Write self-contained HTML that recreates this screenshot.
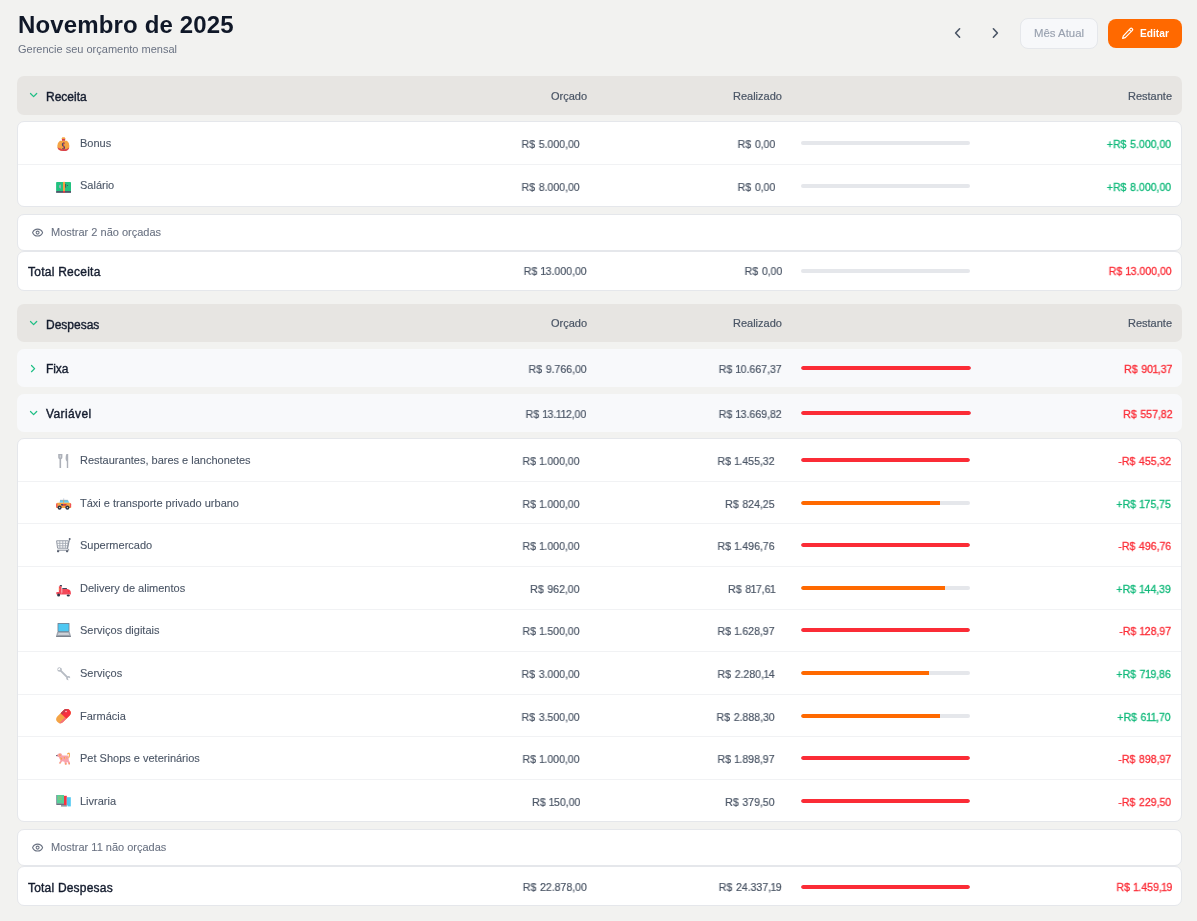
<!DOCTYPE html>
<html><head><meta charset="utf-8"><style>
html,body{margin:0;padding:0;width:1197px;height:921px;overflow:hidden;background:#f2f2f0;font-family:"Liberation Sans", sans-serif;}
.t{position:absolute;white-space:nowrap;will-change:transform;}
.b{position:absolute;}
.one{margin:0 -0.6px;}
svg{display:block}
</style></head><body>
<div class="t" style="left:18px;top:12.68px;font-size:24px;line-height:24px;font-weight:700;color:#101828;letter-spacing:0.15px;">Novembro de 2025</div><div class="t" style="left:18px;top:43.69px;font-size:11px;line-height:11px;color:#6a7282;">Gerencie seu orçamento mensal</div><svg class="b" style="left:950px;top:26px" width="14" height="14" viewBox="0 0 14 14"><path d="M9.6 2.8 L5.6 7 L9.6 11.2" fill="none" stroke="#4a5565" stroke-width="1.6" stroke-linecap="round" stroke-linejoin="round"/></svg><svg class="b" style="left:989px;top:26px" width="14" height="14" viewBox="0 0 14 14"><path d="M4.4 2.8 L8.4 7 L4.4 11.2" fill="none" stroke="#4a5565" stroke-width="1.6" stroke-linecap="round" stroke-linejoin="round"/></svg><div class="b" style="left:1020px;top:18px;width:77.5px;height:31px;background:#f7f8fa;border-radius:8px;border:1px solid #e5e7eb;box-sizing:border-box;"></div><div class="t" style="left:1034px;top:27.65px;font-size:11.4px;line-height:11.4px;color:#99a1af;-webkit-text-stroke:0.15px #99a1af;">Mês Atual</div><div class="b" style="left:1108px;top:19px;width:74px;height:29px;background:#ff6900;border-radius:8px;"></div><svg class="b" style="left:1120.6px;top:27.2px" width="14" height="13" viewBox="0 0 14 13"><path d="M9.2 1.6 a1.4 1.4 0 0 1 2 2 L4.2 10.6 L1.6 11.4 L2.4 8.8 Z M8.2 2.6 L10.2 4.6" fill="none" stroke="#fff" stroke-width="1.2" stroke-linejoin="round"/></svg><div class="t" style="left:1140.3px;top:28.57px;font-size:10.2px;line-height:10.2px;font-weight:700;color:#fff;">Editar</div><div class="b" style="left:17px;top:76px;width:1165px;height:39px;background:#e7e5e2;border-radius:7px;"></div><svg class="b" style="left:28.5px;top:92px" width="10" height="8" viewBox="0 0 10 8"><path d="M1.5 1.5 L4.6 4.6 L7.7 1.5" fill="none" stroke="#1fbf85" stroke-width="1.25" stroke-linecap="round" stroke-linejoin="round"/></svg><div class="t" style="left:46.4px;top:90.84px;font-size:12px;line-height:12px;color:#141c2e;-webkit-text-stroke:0.38px #141c2e;">Receita</div><div class="t" style="right:610.3px;top:90.69px;font-size:11px;line-height:11px;color:#4a5565;-webkit-text-stroke:0.2px #4a5565;">Orçado</div><div class="t" style="right:415px;top:90.69px;font-size:11px;line-height:11px;color:#4a5565;-webkit-text-stroke:0.2px #4a5565;">Realizado</div><div class="t" style="right:24.700000000000045px;top:90.69px;font-size:11px;line-height:11px;color:#4a5565;-webkit-text-stroke:0.2px #4a5565;">Restante</div><div class="b" style="left:17px;top:121px;width:1165px;height:86px;background:#fff;border-radius:7px;border:1px solid #e5e7eb;box-sizing:border-box;"></div><div class="b" style="left:18px;top:164px;width:1163px;height:1px;background:#f1f2f4;border-radius:0px;"></div><div class="b" style="left:56px;top:136px;width:16px;height:16px"><svg width="16" height="16" viewBox="0 0 16 16" shape-rendering="geometricPrecision"><path d="M5.2 3.2 L6.4 1.2 L8.6 1.2 L9.8 3.2Z" fill="#f4a445"/><rect x="6" y="3" width="3.1" height="1.9" fill="#d9424f"/><path d="M4 4.7 L11 4.7 Q13.4 6.5 13.4 10 Q13.4 15 7.5 15 Q1.3 15 1.3 10 Q1.3 6.5 4 4.7Z" fill="#f4a445"/><path d="M1.5 11.2 Q3 12.6 4.6 12.4 Q6 13.6 7.5 13.2 Q10 13.8 13.2 11.4 Q12.8 15 7.5 15 Q2 15 1.5 11.2Z" fill="#d9424f"/><path d="M8.6 7.2 Q6.2 6.8 6.4 8.8 Q6.6 10 8 10.4 Q9 11 8.2 12.6 Q7 13 6.4 12.4" fill="none" stroke="#3b4a6b" stroke-width="1.1"/><path d="M7.6 6.2 L7.6 13.8" stroke="#c8404e" stroke-width="0.8"/></svg></div><div class="t" style="left:80px;top:137.69px;font-size:11px;line-height:11px;color:#4a5565;-webkit-text-stroke:0.1px #4a5565;">Bonus</div><div class="t" style="right:617px;top:138.69px;font-size:11px;line-height:11px;color:#4a5565;-webkit-text-stroke:0.2px #4a5565;transform:scaleX(0.958);transform-origin:100% 50%;word-spacing:0.8px;">R$ 5.000,00</div><div class="t" style="right:422px;top:138.69px;font-size:11px;line-height:11px;color:#4a5565;-webkit-text-stroke:0.2px #4a5565;transform:scaleX(0.958);transform-origin:100% 50%;word-spacing:0.8px;">R$ 0,00</div><div class="b" style="left:801px;top:141px;width:169px;height:4px;background:#e5e7eb;border-radius:2px;overflow:hidden"><div style="width:0.00%;height:100%;background:#fb2c36;border-radius:2px 0 0 2px"></div></div><div class="t" style="right:26px;top:138.69px;font-size:11px;line-height:11px;color:#10b97a;-webkit-text-stroke:0.3px #10b97a;transform:scaleX(0.958);transform-origin:100% 50%;word-spacing:0.8px;">+R$ 5.000,00</div><div class="b" style="left:56px;top:179px;width:16px;height:16px"><svg width="16" height="16" viewBox="0 0 16 16" shape-rendering="geometricPrecision"><rect x="0.1" y="2.9" width="14.9" height="9.4" rx="0.8" fill="#22c27f"/><rect x="0.1" y="12.1" width="14.9" height="1.7" fill="#3f4a5e"/><rect x="7" y="2.9" width="2" height="9.3" fill="#f59f42"/><rect x="7" y="12.1" width="2" height="1.7" fill="#e0404c"/><path d="M3.2 6.6 L4.7 5.3 L4.7 9.8 L3.2 8.6Z" fill="#b9a7c8"/><rect x="9.2" y="5" width="0.9" height="3.6" fill="#3f4a5e"/><circle cx="11.5" cy="6.5" r="0.6" fill="#3f4a5e"/></svg></div><div class="t" style="left:80px;top:179.69px;font-size:11px;line-height:11px;color:#4a5565;-webkit-text-stroke:0.1px #4a5565;">Salário</div><div class="t" style="right:617px;top:182.09px;font-size:11px;line-height:11px;color:#4a5565;-webkit-text-stroke:0.2px #4a5565;transform:scaleX(0.958);transform-origin:100% 50%;word-spacing:0.8px;">R$ 8.000,00</div><div class="t" style="right:422px;top:182.09px;font-size:11px;line-height:11px;color:#4a5565;-webkit-text-stroke:0.2px #4a5565;transform:scaleX(0.958);transform-origin:100% 50%;word-spacing:0.8px;">R$ 0,00</div><div class="b" style="left:801px;top:184px;width:169px;height:4px;background:#e5e7eb;border-radius:2px;overflow:hidden"><div style="width:0.00%;height:100%;background:#fb2c36;border-radius:2px 0 0 2px"></div></div><div class="t" style="right:26px;top:182.09px;font-size:11px;line-height:11px;color:#10b97a;-webkit-text-stroke:0.3px #10b97a;transform:scaleX(0.958);transform-origin:100% 50%;word-spacing:0.8px;">+R$ 8.000,00</div><div class="b" style="left:17px;top:214px;width:1165px;height:37px;background:#fff;border-radius:7px;border:1px solid #e5e7eb;box-sizing:border-box;"></div><svg class="b" style="left:30.8px;top:224px" width="13" height="18" viewBox="0 0 13 18"><g transform="translate(0.6 2.6) scale(0.5)"><path d="M2.062 12.348a1 1 0 0 1 0-.696 10.75 10.75 0 0 1 19.876 0 1 1 0 0 1 0 .696 10.75 10.75 0 0 1-19.876 0" fill="none" stroke="#6a7282" stroke-width="2.1"/><circle cx="12" cy="12" r="3" fill="none" stroke="#6a7282" stroke-width="2.1"/></g></svg><div class="t" style="left:50.7px;top:226.69px;font-size:11px;line-height:11px;color:#6a7282;-webkit-text-stroke:0.1px #6a7282;">Mostrar 2 não orçadas</div><div class="b" style="left:17px;top:251px;width:1165px;height:40px;background:#fff;border-radius:7px;border:1px solid #e5e7eb;box-sizing:border-box;"></div><div class="t" style="left:27.6px;top:265.64px;font-size:12px;line-height:12px;color:#141c2e;letter-spacing:0.25px;-webkit-text-stroke:0.38px #141c2e;">Total Receita</div><div class="t" style="right:610.5px;top:266.49px;font-size:11px;line-height:11px;color:#4a5565;-webkit-text-stroke:0.2px #4a5565;transform:scaleX(0.958);transform-origin:100% 50%;word-spacing:0.8px;">R$ <span class="one">1</span>3.000,00</div><div class="t" style="right:415px;top:266.49px;font-size:11px;line-height:11px;color:#4a5565;-webkit-text-stroke:0.2px #4a5565;transform:scaleX(0.958);transform-origin:100% 50%;word-spacing:0.8px;">R$ 0,00</div><div class="b" style="left:801px;top:269px;width:169px;height:4px;background:#e5e7eb;border-radius:2px;overflow:hidden"><div style="width:0.00%;height:100%;background:#fb2c36;border-radius:2px 0 0 2px"></div></div><div class="t" style="right:25px;top:266.49px;font-size:11px;line-height:11px;color:#fb2c36;-webkit-text-stroke:0.3px #fb2c36;transform:scaleX(0.958);transform-origin:100% 50%;word-spacing:0.8px;">R$ <span class="one">1</span>3.000,00</div><div class="b" style="left:17px;top:304px;width:1165px;height:38px;background:#e7e5e2;border-radius:7px;"></div><svg class="b" style="left:28.5px;top:320px" width="10" height="8" viewBox="0 0 10 8"><path d="M1.5 1.5 L4.6 4.6 L7.7 1.5" fill="none" stroke="#1fbf85" stroke-width="1.25" stroke-linecap="round" stroke-linejoin="round"/></svg><div class="t" style="left:46.4px;top:318.64px;font-size:12px;line-height:12px;color:#141c2e;-webkit-text-stroke:0.38px #141c2e;">Despesas</div><div class="t" style="right:610.3px;top:318.19px;font-size:11px;line-height:11px;color:#4a5565;-webkit-text-stroke:0.2px #4a5565;">Orçado</div><div class="t" style="right:415px;top:318.19px;font-size:11px;line-height:11px;color:#4a5565;-webkit-text-stroke:0.2px #4a5565;">Realizado</div><div class="t" style="right:24.700000000000045px;top:318.19px;font-size:11px;line-height:11px;color:#4a5565;-webkit-text-stroke:0.2px #4a5565;">Restante</div><div class="b" style="left:17px;top:349px;width:1165px;height:38px;background:#f8f9fb;border-radius:7px;"></div><svg class="b" style="left:30px;top:363.5px" width="8" height="10" viewBox="0 0 8 10"><path d="M1.5 1.5 L4.6 4.6 L1.5 7.7" fill="none" stroke="#1fbf85" stroke-width="1.25" stroke-linecap="round" stroke-linejoin="round"/></svg><div class="t" style="left:46.4px;top:362.64px;font-size:12px;line-height:12px;color:#141c2e;letter-spacing:-0.1px;-webkit-text-stroke:0.38px #141c2e;">Fixa</div><div class="t" style="right:610.5px;top:363.89px;font-size:11px;line-height:11px;color:#4a5565;-webkit-text-stroke:0.2px #4a5565;transform:scaleX(0.958);transform-origin:100% 50%;word-spacing:0.8px;">R$ 9.766,00</div><div class="t" style="right:415px;top:363.89px;font-size:11px;line-height:11px;color:#4a5565;-webkit-text-stroke:0.2px #4a5565;transform:scaleX(0.958);transform-origin:100% 50%;word-spacing:0.8px;">R$ <span class="one">1</span>0.667,37</div><div class="b" style="left:801px;top:366px;width:170px;height:4px;background:#e5e7eb;border-radius:2px;overflow:hidden"><div style="width:100.00%;height:100%;background:#fb2c36;border-radius:2px"></div></div><div class="t" style="right:24.40000000000009px;top:363.89px;font-size:11px;line-height:11px;color:#fb2c36;-webkit-text-stroke:0.3px #fb2c36;transform:scaleX(0.958);transform-origin:100% 50%;word-spacing:0.8px;">R$ 90<span class="one">1</span>,37</div><div class="b" style="left:17px;top:394px;width:1165px;height:38px;background:#f8f9fb;border-radius:7px;"></div><svg class="b" style="left:28.5px;top:410px" width="10" height="8" viewBox="0 0 10 8"><path d="M1.5 1.5 L4.6 4.6 L7.7 1.5" fill="none" stroke="#1fbf85" stroke-width="1.25" stroke-linecap="round" stroke-linejoin="round"/></svg><div class="t" style="left:46.4px;top:408.24px;font-size:12px;line-height:12px;color:#141c2e;letter-spacing:0.4px;-webkit-text-stroke:0.38px #141c2e;">Variável</div><div class="t" style="right:610.5px;top:409.49px;font-size:11px;line-height:11px;color:#4a5565;-webkit-text-stroke:0.2px #4a5565;transform:scaleX(0.958);transform-origin:100% 50%;word-spacing:0.8px;">R$ <span class="one">1</span>3.<span class="one">1</span><span class="one">1</span>2,00</div><div class="t" style="right:415px;top:409.49px;font-size:11px;line-height:11px;color:#4a5565;-webkit-text-stroke:0.2px #4a5565;transform:scaleX(0.958);transform-origin:100% 50%;word-spacing:0.8px;">R$ <span class="one">1</span>3.669,82</div><div class="b" style="left:801px;top:411px;width:170px;height:4px;background:#e5e7eb;border-radius:2px;overflow:hidden"><div style="width:100.00%;height:100%;background:#fb2c36;border-radius:2px"></div></div><div class="t" style="right:24.40000000000009px;top:409.49px;font-size:11px;line-height:11px;color:#fb2c36;-webkit-text-stroke:0.3px #fb2c36;transform:scaleX(0.958);transform-origin:100% 50%;word-spacing:0.8px;">R$ 557,82</div><div class="b" style="left:17px;top:438px;width:1165px;height:384px;background:#fff;border-radius:7px;border:1px solid #e5e7eb;box-sizing:border-box;"></div><div class="b" style="left:18px;top:481px;width:1163px;height:1px;background:#f1f2f4;border-radius:0px;"></div><div class="b" style="left:56px;top:453px;width:16px;height:16px"><svg width="16" height="16" viewBox="0 0 16 16" shape-rendering="geometricPrecision"><path d="M2.2 1 L6.4 1 L6.4 4.6 Q6.4 5.8 5.1 6.2 L5.1 15 L3.5 15 L3.5 6.2 Q2.2 5.8 2.2 4.6Z" fill="#adb1b9"/><rect x="3.8" y="2.2" width="0.9" height="2.4" fill="#dfe1e5"/><path d="M10.4 1 L12.2 1 L12.2 15 L10.8 15 L10.8 8.6 Q9.6 7.6 9.6 5.6 Q9.6 2.4 10.4 1Z" fill="#adb1b9"/></svg></div><div class="t" style="left:80px;top:454.69px;font-size:11px;line-height:11px;color:#4a5565;-webkit-text-stroke:0.1px #4a5565;">Restaurantes, bares e lanchonetes</div><div class="t" style="right:617px;top:455.69px;font-size:11px;line-height:11px;color:#4a5565;-webkit-text-stroke:0.2px #4a5565;transform:scaleX(0.958);transform-origin:100% 50%;word-spacing:0.8px;">R$ <span class="one">1</span>.000,00</div><div class="t" style="right:422px;top:455.69px;font-size:11px;line-height:11px;color:#4a5565;-webkit-text-stroke:0.2px #4a5565;transform:scaleX(0.958);transform-origin:100% 50%;word-spacing:0.8px;">R$ <span class="one">1</span>.455,32</div><div class="b" style="left:801px;top:458px;width:169px;height:4px;background:#e5e7eb;border-radius:2px;overflow:hidden"><div style="width:100.00%;height:100%;background:#fb2c36;border-radius:2px"></div></div><div class="t" style="right:26px;top:455.69px;font-size:11px;line-height:11px;color:#fb2c36;-webkit-text-stroke:0.3px #fb2c36;transform:scaleX(0.958);transform-origin:100% 50%;word-spacing:0.8px;">-R$ 455,32</div><div class="b" style="left:18px;top:523px;width:1163px;height:1px;background:#f1f2f4;border-radius:0px;"></div><div class="b" style="left:56px;top:496px;width:16px;height:16px"><svg width="16" height="16" viewBox="0 0 16 16" shape-rendering="geometricPrecision"><rect x="7.3" y="2.3" width="0.9" height="1.8" fill="#c9d3df"/><rect x="4" y="3.9" width="7.9" height="0.8" fill="#7b8090"/><path d="M3.4 6.8 L4.2 4.6 L12.2 4.6 L13.2 6.8Z" fill="#5fcdf0"/><rect x="7.3" y="4.4" width="0.8" height="2.4" fill="#f59f42"/><path d="M0.3 8 Q0.3 6.7 2 6.7 L13.6 6.7 Q15.1 6.7 15.1 8.2 L15.1 11.9 L0.3 11.9Z" fill="#f5a443"/><rect x="0.1" y="7.6" width="1.3" height="3.8" fill="#f0505c"/><rect x="14" y="7.6" width="1.1" height="3.6" fill="#f0505c"/><path d="M5.2 8 L10.8 8 L10 9.8 L6.2 9.8Z" fill="#c9404e"/><rect x="5" y="8" width="2" height="1.4" fill="#3f4a6e"/><circle cx="3.6" cy="11.6" r="2.1" fill="#2c3648"/><circle cx="3.6" cy="11.6" r="0.7" fill="#d5d9e0"/><circle cx="11.4" cy="11.6" r="2.1" fill="#2c3648"/><circle cx="11.4" cy="11.6" r="0.7" fill="#d5d9e0"/></svg></div><div class="t" style="left:80px;top:497.69px;font-size:11px;line-height:11px;color:#4a5565;-webkit-text-stroke:0.1px #4a5565;">Táxi e transporte privado urbano</div><div class="t" style="right:617px;top:498.69px;font-size:11px;line-height:11px;color:#4a5565;-webkit-text-stroke:0.2px #4a5565;transform:scaleX(0.958);transform-origin:100% 50%;word-spacing:0.8px;">R$ <span class="one">1</span>.000,00</div><div class="t" style="right:422px;top:498.69px;font-size:11px;line-height:11px;color:#4a5565;-webkit-text-stroke:0.2px #4a5565;transform:scaleX(0.958);transform-origin:100% 50%;word-spacing:0.8px;">R$ 824,25</div><div class="b" style="left:801px;top:501px;width:169px;height:4px;background:#e5e7eb;border-radius:2px;overflow:hidden"><div style="width:82.40%;height:100%;background:#ff6900;border-radius:2px 0 0 2px"></div></div><div class="t" style="right:26px;top:498.69px;font-size:11px;line-height:11px;color:#10b97a;-webkit-text-stroke:0.3px #10b97a;transform:scaleX(0.958);transform-origin:100% 50%;word-spacing:0.8px;">+R$ <span class="one">1</span>75,75</div><div class="b" style="left:18px;top:566px;width:1163px;height:1px;background:#f1f2f4;border-radius:0px;"></div><div class="b" style="left:56px;top:538px;width:16px;height:16px"><svg width="16" height="16" viewBox="0 0 16 16" shape-rendering="geometricPrecision"><path d="M0.6 2.8 L12.4 2.8 L11.6 10.2 L1.6 10.2Z" fill="none" stroke="#9097a3" stroke-width="1"/><path d="M0.9 5.3 L12.1 5.3 M1.2 7.8 L11.9 7.8 M3.8 2.8 L3.9 10.2 M6.8 2.8 L6.8 10.2 M9.6 2.8 L9.4 10.2" stroke="#a3a9b3" stroke-width="0.9"/><path d="M13.6 1.2 L11.4 10.6 Q13 11 12.8 12.2 L1.2 12.2" fill="none" stroke="#8a919d" stroke-width="1"/><circle cx="13.7" cy="1.1" r="1" fill="#5b6272"/><rect x="1" y="12.2" width="2.2" height="2" rx="0.6" fill="#5b6272"/><rect x="10" y="12.2" width="2.2" height="2" rx="0.6" fill="#5b6272"/></svg></div><div class="t" style="left:80px;top:539.69px;font-size:11px;line-height:11px;color:#4a5565;-webkit-text-stroke:0.1px #4a5565;">Supermercado</div><div class="t" style="right:617px;top:540.69px;font-size:11px;line-height:11px;color:#4a5565;-webkit-text-stroke:0.2px #4a5565;transform:scaleX(0.958);transform-origin:100% 50%;word-spacing:0.8px;">R$ <span class="one">1</span>.000,00</div><div class="t" style="right:422px;top:540.69px;font-size:11px;line-height:11px;color:#4a5565;-webkit-text-stroke:0.2px #4a5565;transform:scaleX(0.958);transform-origin:100% 50%;word-spacing:0.8px;">R$ <span class="one">1</span>.496,76</div><div class="b" style="left:801px;top:543px;width:169px;height:4px;background:#e5e7eb;border-radius:2px;overflow:hidden"><div style="width:100.00%;height:100%;background:#fb2c36;border-radius:2px"></div></div><div class="t" style="right:26px;top:540.69px;font-size:11px;line-height:11px;color:#fb2c36;-webkit-text-stroke:0.3px #fb2c36;transform:scaleX(0.958);transform-origin:100% 50%;word-spacing:0.8px;">-R$ 496,76</div><div class="b" style="left:18px;top:609px;width:1163px;height:1px;background:#f1f2f4;border-radius:0px;"></div><div class="b" style="left:56px;top:581px;width:16px;height:16px"><svg width="16" height="16" viewBox="0 0 16 16" shape-rendering="geometricPrecision"><rect x="3.8" y="4" width="2.1" height="1.6" fill="#3f4a5e"/><path d="M2.9 5.2 L5.5 5.2 L5.6 11 L2.9 11Z" fill="#f24a5a"/><rect x="2.9" y="7.4" width="0.7" height="1.4" fill="#f5b041"/><rect x="6.2" y="7" width="4.8" height="1.1" rx="0.5" fill="#3f4a5e"/><path d="M6.2 8.1 L11.5 8.1 Q14.9 8.6 14.9 12 L14.9 13.6 L5.5 13.6 L5.5 11.8 L6.2 11.8Z" fill="#f24a5a"/><path d="M0.1 11.8 Q0.3 11 1.6 11 L5.6 11 L5.6 13.6 L0.6 13.6Z" fill="#f24a5a"/><path d="M11.8 9 Q13.4 9.8 13.6 11.2 L12 10.6Z" fill="#ff1e2e"/><circle cx="2.6" cy="14" r="1.5" fill="#2c3648"/><ellipse cx="12.3" cy="14.4" rx="1.6" ry="1" fill="#2c3648"/></svg></div><div class="t" style="left:80px;top:582.69px;font-size:11px;line-height:11px;color:#4a5565;-webkit-text-stroke:0.1px #4a5565;">Delivery de alimentos</div><div class="t" style="right:617px;top:583.69px;font-size:11px;line-height:11px;color:#4a5565;-webkit-text-stroke:0.2px #4a5565;transform:scaleX(0.958);transform-origin:100% 50%;word-spacing:0.8px;">R$ 962,00</div><div class="t" style="right:422px;top:583.69px;font-size:11px;line-height:11px;color:#4a5565;-webkit-text-stroke:0.2px #4a5565;transform:scaleX(0.958);transform-origin:100% 50%;word-spacing:0.8px;">R$ 8<span class="one">1</span>7,6<span class="one">1</span></div><div class="b" style="left:801px;top:586px;width:169px;height:4px;background:#e5e7eb;border-radius:2px;overflow:hidden"><div style="width:85.00%;height:100%;background:#ff6900;border-radius:2px 0 0 2px"></div></div><div class="t" style="right:26px;top:583.69px;font-size:11px;line-height:11px;color:#10b97a;-webkit-text-stroke:0.3px #10b97a;transform:scaleX(0.958);transform-origin:100% 50%;word-spacing:0.8px;">+R$ <span class="one">1</span>44,39</div><div class="b" style="left:18px;top:651px;width:1163px;height:1px;background:#f1f2f4;border-radius:0px;"></div><div class="b" style="left:56px;top:623px;width:16px;height:16px"><svg width="16" height="16" viewBox="0 0 16 16" shape-rendering="geometricPrecision"><rect x="1.6" y="0.1" width="11.8" height="8.8" fill="#6b7280"/><rect x="2.3" y="0.8" width="10.4" height="7.5" fill="#4fc8f2"/><path d="M1.2 9 L13.8 9 L14.9 13 L0.1 13Z" fill="#a3a9b3"/><rect x="2.4" y="10" width="10.2" height="0.7" fill="#e3e6ea"/><rect x="2" y="11.4" width="11" height="0.6" fill="#e3e6ea"/><rect x="0.1" y="12.8" width="14.8" height="1.2" fill="#7b818c"/></svg></div><div class="t" style="left:80px;top:624.69px;font-size:11px;line-height:11px;color:#4a5565;-webkit-text-stroke:0.1px #4a5565;">Serviços digitais</div><div class="t" style="right:617px;top:625.69px;font-size:11px;line-height:11px;color:#4a5565;-webkit-text-stroke:0.2px #4a5565;transform:scaleX(0.958);transform-origin:100% 50%;word-spacing:0.8px;">R$ <span class="one">1</span>.500,00</div><div class="t" style="right:422px;top:625.69px;font-size:11px;line-height:11px;color:#4a5565;-webkit-text-stroke:0.2px #4a5565;transform:scaleX(0.958);transform-origin:100% 50%;word-spacing:0.8px;">R$ <span class="one">1</span>.628,97</div><div class="b" style="left:801px;top:628px;width:169px;height:4px;background:#e5e7eb;border-radius:2px;overflow:hidden"><div style="width:100.00%;height:100%;background:#fb2c36;border-radius:2px"></div></div><div class="t" style="right:26px;top:625.69px;font-size:11px;line-height:11px;color:#fb2c36;-webkit-text-stroke:0.3px #fb2c36;transform:scaleX(0.958);transform-origin:100% 50%;word-spacing:0.8px;">-R$ <span class="one">1</span>28,97</div><div class="b" style="left:18px;top:694px;width:1163px;height:1px;background:#f1f2f4;border-radius:0px;"></div><div class="b" style="left:56px;top:666px;width:16px;height:16px"><svg width="16" height="16" viewBox="0 0 16 16" shape-rendering="geometricPrecision"><path d="M4.2 1.2 Q1.4 0.8 1.2 3.6 Q1.4 6.2 4.4 5.8 L10.2 11.6 Q10 14.4 12.6 14.2 L11.8 12.6 L12.6 11.6 L14.2 12.2 Q14.6 9.6 11.6 10.2 L5.8 4.4 Q6.2 1.4 3.4 1.6 L4.4 3.2 L3.2 4.2 L1.6 3.4" fill="#b7bcc4"/></svg></div><div class="t" style="left:80px;top:667.69px;font-size:11px;line-height:11px;color:#4a5565;-webkit-text-stroke:0.1px #4a5565;">Serviços</div><div class="t" style="right:617px;top:668.69px;font-size:11px;line-height:11px;color:#4a5565;-webkit-text-stroke:0.2px #4a5565;transform:scaleX(0.958);transform-origin:100% 50%;word-spacing:0.8px;">R$ 3.000,00</div><div class="t" style="right:422px;top:668.69px;font-size:11px;line-height:11px;color:#4a5565;-webkit-text-stroke:0.2px #4a5565;transform:scaleX(0.958);transform-origin:100% 50%;word-spacing:0.8px;">R$ 2.280,<span class="one">1</span>4</div><div class="b" style="left:801px;top:671px;width:169px;height:4px;background:#e5e7eb;border-radius:2px;overflow:hidden"><div style="width:76.00%;height:100%;background:#ff6900;border-radius:2px 0 0 2px"></div></div><div class="t" style="right:26px;top:668.69px;font-size:11px;line-height:11px;color:#10b97a;-webkit-text-stroke:0.3px #10b97a;transform:scaleX(0.958);transform-origin:100% 50%;word-spacing:0.8px;">+R$ 7<span class="one">1</span>9,86</div><div class="b" style="left:18px;top:736px;width:1163px;height:1px;background:#f1f2f4;border-radius:0px;"></div><div class="b" style="left:56px;top:709px;width:16px;height:16px"><svg width="16" height="16" viewBox="0 0 16 16" shape-rendering="geometricPrecision"><g transform="translate(7.5 7) rotate(-45) translate(-7.5 -7)"><rect x="-1" y="3" width="17" height="8" rx="4" fill="#f4a445"/><path d="M7.5 3 L12 3 A4 4 0 0 1 12 11 L7.5 11Z" fill="#f7313f"/><path d="M7.5 3 L12 3 A4 4 0 0 1 15.4 5 L7.5 5Z" fill="#c0404e"/><circle cx="12.5" cy="5.6" r="0.8" fill="#ffd0d4"/><path d="M-0.6 9 L7.5 9 L7.5 11 L3 11 A4 4 0 0 1 -0.6 9Z" fill="#f6707c"/></g></svg></div><div class="t" style="left:80px;top:710.69px;font-size:11px;line-height:11px;color:#4a5565;-webkit-text-stroke:0.1px #4a5565;">Farmácia</div><div class="t" style="right:617px;top:711.69px;font-size:11px;line-height:11px;color:#4a5565;-webkit-text-stroke:0.2px #4a5565;transform:scaleX(0.958);transform-origin:100% 50%;word-spacing:0.8px;">R$ 3.500,00</div><div class="t" style="right:422px;top:711.69px;font-size:11px;line-height:11px;color:#4a5565;-webkit-text-stroke:0.2px #4a5565;transform:scaleX(0.958);transform-origin:100% 50%;word-spacing:0.8px;">R$ 2.888,30</div><div class="b" style="left:801px;top:714px;width:169px;height:4px;background:#e5e7eb;border-radius:2px;overflow:hidden"><div style="width:82.50%;height:100%;background:#ff6900;border-radius:2px 0 0 2px"></div></div><div class="t" style="right:26px;top:711.69px;font-size:11px;line-height:11px;color:#10b97a;-webkit-text-stroke:0.3px #10b97a;transform:scaleX(0.958);transform-origin:100% 50%;word-spacing:0.8px;">+R$ 6<span class="one">1</span><span class="one">1</span>,70</div><div class="b" style="left:18px;top:779px;width:1163px;height:1px;background:#f1f2f4;border-radius:0px;"></div><div class="b" style="left:56px;top:751px;width:16px;height:16px"><svg width="16" height="16" viewBox="0 0 16 16" shape-rendering="geometricPrecision"><path d="M0.6 4.8 Q1.2 2.8 3.2 2.2 L5 2.2 Q6 3 6.4 4.6 L11.4 4.6 Q12.6 4.6 12.6 6 L12.8 9.4 L14 11.6 L14 13.4 L12.4 13.4 L11.6 11 L10.6 11.2 L10.8 13.6 L8.8 13.6 L8.4 10.8 Q6.8 10.6 6.2 10.2 L4.6 12.6 L2.8 12.6 L4.4 9.6 Q3.4 7.6 3 6.2 Q1.4 6.2 0.6 4.8Z" fill="#f9a3ad"/><path d="M10.8 3.4 Q11.2 1.6 13.2 1.6 Q14.4 2.4 13.8 5.4 L13 7.2 L12.4 6.8 Q13.2 4 12.8 3 Q11.8 2.6 11.6 3.6Z" fill="#f5a443"/><path d="M3.2 3 Q4.6 2.6 4.8 4.4 L3.6 5.4Z M4.2 6.2 L6.2 7 L5.4 9.4Z M7.6 6.4 L9.2 5.6 L8.6 8.6Z M10.4 6 L11.4 6.8 L11 8.4Z M3 12 L4.6 11.2 L4.6 12.6Z M12.4 11.6 L14 12.4 L13.6 13.4Z M9 12.4 L10.4 12.2 L10.4 13.6 L9 13.6Z" fill="#f5a443"/><circle cx="0.8" cy="4.6" r="0.7" fill="#33415c"/></svg></div><div class="t" style="left:80px;top:752.69px;font-size:11px;line-height:11px;color:#4a5565;-webkit-text-stroke:0.1px #4a5565;">Pet Shops e veterinários</div><div class="t" style="right:617px;top:753.69px;font-size:11px;line-height:11px;color:#4a5565;-webkit-text-stroke:0.2px #4a5565;transform:scaleX(0.958);transform-origin:100% 50%;word-spacing:0.8px;">R$ <span class="one">1</span>.000,00</div><div class="t" style="right:422px;top:753.69px;font-size:11px;line-height:11px;color:#4a5565;-webkit-text-stroke:0.2px #4a5565;transform:scaleX(0.958);transform-origin:100% 50%;word-spacing:0.8px;">R$ <span class="one">1</span>.898,97</div><div class="b" style="left:801px;top:756px;width:169px;height:4px;background:#e5e7eb;border-radius:2px;overflow:hidden"><div style="width:100.00%;height:100%;background:#fb2c36;border-radius:2px"></div></div><div class="t" style="right:26px;top:753.69px;font-size:11px;line-height:11px;color:#fb2c36;-webkit-text-stroke:0.3px #fb2c36;transform:scaleX(0.958);transform-origin:100% 50%;word-spacing:0.8px;">-R$ 898,97</div><div class="b" style="left:56px;top:794px;width:16px;height:16px"><svg width="16" height="16" viewBox="0 0 16 16" shape-rendering="geometricPrecision"><rect x="0.6" y="1" width="7.4" height="8.6" fill="#55cf98"/><rect x="0.1" y="1" width="0.8" height="8.6" fill="#8a8fa0"/><rect x="0.3" y="9.4" width="7.8" height="1.6" fill="#6b7280"/><circle cx="3" cy="3" r="0.6" fill="#f4a445"/><circle cx="5" cy="3" r="0.6" fill="#f4a445"/><circle cx="3" cy="5" r="0.6" fill="#f4a445"/><circle cx="5" cy="5" r="0.6" fill="#f4a445"/><rect x="8" y="1.8" width="2.8" height="9.4" fill="#f7313f"/><rect x="10.8" y="3.2" width="4" height="9.2" fill="#4fc8f2"/><rect x="11" y="11.6" width="1" height="1" fill="#fff"/><rect x="5" y="11.2" width="5.8" height="1.3" fill="#7b818c"/></svg></div><div class="t" style="left:80px;top:795.69px;font-size:11px;line-height:11px;color:#4a5565;-webkit-text-stroke:0.1px #4a5565;">Livraria</div><div class="t" style="right:617px;top:796.69px;font-size:11px;line-height:11px;color:#4a5565;-webkit-text-stroke:0.2px #4a5565;transform:scaleX(0.958);transform-origin:100% 50%;word-spacing:0.8px;">R$ <span class="one">1</span>50,00</div><div class="t" style="right:422px;top:796.69px;font-size:11px;line-height:11px;color:#4a5565;-webkit-text-stroke:0.2px #4a5565;transform:scaleX(0.958);transform-origin:100% 50%;word-spacing:0.8px;">R$ 379,50</div><div class="b" style="left:801px;top:799px;width:169px;height:4px;background:#e5e7eb;border-radius:2px;overflow:hidden"><div style="width:100.00%;height:100%;background:#fb2c36;border-radius:2px"></div></div><div class="t" style="right:26px;top:796.69px;font-size:11px;line-height:11px;color:#fb2c36;-webkit-text-stroke:0.3px #fb2c36;transform:scaleX(0.958);transform-origin:100% 50%;word-spacing:0.8px;">-R$ 229,50</div><div class="b" style="left:17px;top:829px;width:1165px;height:37px;background:#fff;border-radius:7px;border:1px solid #e5e7eb;box-sizing:border-box;"></div><svg class="b" style="left:30.8px;top:839px" width="13" height="18" viewBox="0 0 13 18"><g transform="translate(0.6 2.6) scale(0.5)"><path d="M2.062 12.348a1 1 0 0 1 0-.696 10.75 10.75 0 0 1 19.876 0 1 1 0 0 1 0 .696 10.75 10.75 0 0 1-19.876 0" fill="none" stroke="#6a7282" stroke-width="2.1"/><circle cx="12" cy="12" r="3" fill="none" stroke="#6a7282" stroke-width="2.1"/></g></svg><div class="t" style="left:50.7px;top:841.69px;font-size:11px;line-height:11px;color:#6a7282;-webkit-text-stroke:0.1px #6a7282;">Mostrar 11 não orçadas</div><div class="b" style="left:17px;top:866px;width:1165px;height:40px;background:#fff;border-radius:7px;border:1px solid #e5e7eb;box-sizing:border-box;"></div><div class="t" style="left:27.6px;top:881.54px;font-size:12px;line-height:12px;color:#141c2e;letter-spacing:0.2px;-webkit-text-stroke:0.38px #141c2e;">Total Despesas</div><div class="t" style="right:610.5px;top:882.39px;font-size:11px;line-height:11px;color:#4a5565;-webkit-text-stroke:0.2px #4a5565;transform:scaleX(0.958);transform-origin:100% 50%;word-spacing:0.8px;">R$ 22.878,00</div><div class="t" style="right:415px;top:882.39px;font-size:11px;line-height:11px;color:#4a5565;-webkit-text-stroke:0.2px #4a5565;transform:scaleX(0.958);transform-origin:100% 50%;word-spacing:0.8px;">R$ 24.337,<span class="one">1</span>9</div><div class="b" style="left:801px;top:885px;width:169px;height:4px;background:#e5e7eb;border-radius:2px;overflow:hidden"><div style="width:100.00%;height:100%;background:#fb2c36;border-radius:2px"></div></div><div class="t" style="right:25px;top:882.39px;font-size:11px;line-height:11px;color:#fb2c36;-webkit-text-stroke:0.3px #fb2c36;transform:scaleX(0.958);transform-origin:100% 50%;word-spacing:0.8px;">R$ <span class="one">1</span>.459,<span class="one">1</span>9</div>
</body></html>
